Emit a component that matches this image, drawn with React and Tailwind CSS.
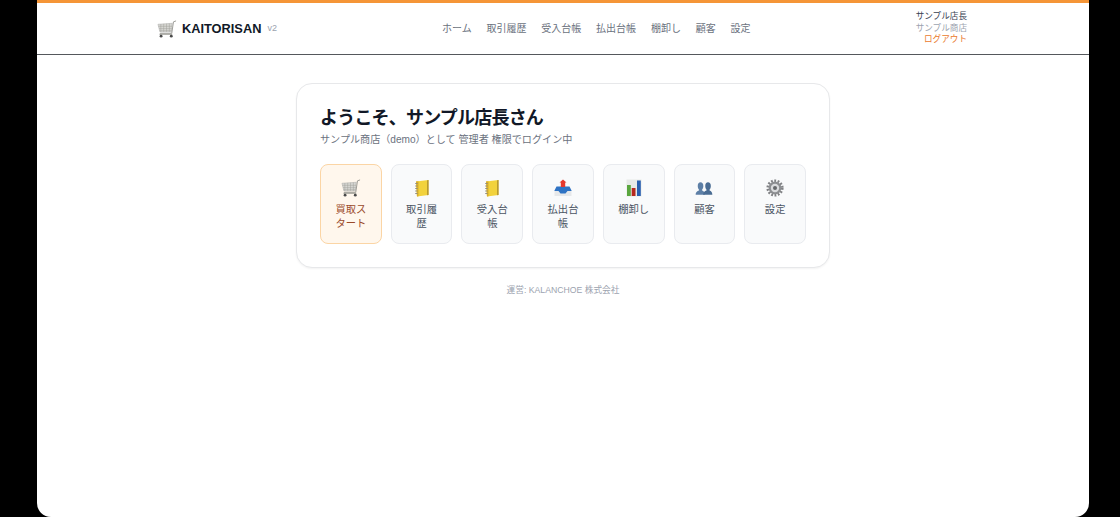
import React from 'react';

const font = "font-['Liberation_Sans','Noto_Sans_CJK_JP',sans-serif]";

const CartIcon = () => (
  <svg width="20" height="20" viewBox="-0.5 -0.5 21 21">
    <path d="M0.5 5 L15.5 4 L14.5 13 L2.5 13 Z" fill="#d6d6d2" stroke="#a8a8a5" strokeWidth="0.5" />
    <path d="M3.5 4.8V13M6.5 4.6V13M9.5 4.4V13M12.5 4.2V13M1 7.2H15.2M1.6 9.6H15M2.2 11.8H14.7" stroke="#a0a09a" strokeWidth="0.5" />
    <path d="M19.5 1.5 L16.8 2.5 L15 14.5 H3 L2.6 16" fill="none" stroke="#8f8f89" strokeWidth="0.9" />
    <rect x="2.5" y="15" width="13" height="1" fill="#96968f" />
    <circle cx="3.8" cy="17.5" r="1.5" fill="#4a4a4a" />
    <circle cx="14.5" cy="17.5" r="1.5" fill="#4a4a4a" />
  </svg>
);

const LedgerIcon = () => (
  <svg width="20" height="20" viewBox="0 0 20 20">
    <path d="M4 3.5 L16.5 2 V17 L5 18.5 Z" fill="#f2d23c" />
    <path d="M15.2 2.2 L16.5 2 V17 L15.2 17.2 Z" fill="#a98c2d" />
    <path d="M4 3.5 L6.5 3.2 V18.2 L5 18.5 Z" fill="#d8ad2b" />
    <path d="M3.2 5.5H5.6M3.2 8H5.6M3.2 10.5H5.6M3.2 13H5.6M3.2 15.5H5.6" stroke="#8d8a7c" strokeWidth="0.9" />
  </svg>
);

const OutboxIcon = () => (
  <svg width="20" height="20" viewBox="0 0 20 20">
    <path d="M1.5 12 H18.5 V18 H1.5 Z" fill="#e6e8ea" />
    <path d="M1.5 12.5 L3.5 8.5 H16.5 L18.5 12.5 V13 L14.5 13 L12.5 15.5 H7.5 L5.5 13 L1.5 13 Z" fill="#2f73c4" />
    <path d="M10 1.5 L13.5 4.5 H12.2 V9 H7.8 V4.5 H6.5 Z" fill="#e5392e" />
  </svg>
);

const ChartIcon = () => (
  <svg width="20" height="20" viewBox="0 0 20 20">
    <rect x="2.5" y="1.5" width="15" height="17" fill="#e7e9e8" />
    <rect x="3" y="7" width="3.8" height="11" fill="#5aa63e" />
    <rect x="7.7" y="10" width="3.8" height="8" fill="#b5281f" />
    <rect x="13" y="2.5" width="3.8" height="15.5" fill="#2a5fb0" />
  </svg>
);

const PeopleIcon = () => (
  <svg width="20" height="20" viewBox="-2 -2 24 24">
    <path d="M0 18 C0 14 3.2 13.8 4.3 12.4 C3.2 11 2.5 9.5 2.5 7.5 C2.5 4.5 3.8 3 5.8 3 C7.8 3 9.2 4.5 9.2 7.5 C9.2 9.5 8.5 11 7.4 12.4 C8.5 13.8 11 14 11 18 Z" fill="#5d7fa6" />
    <path d="M9 18 C9 14 12.2 13.8 13.3 12.4 C12.2 11 11.5 9.5 11.5 7.5 C11.5 4.5 12.8 3 14.8 3 C16.8 3 18.2 4.5 18.2 7.5 C18.2 9.5 17.5 11 16.4 12.4 C17.5 13.8 20 14 20 18 Z" fill="#4a6c93" />
  </svg>
);

const GearIcon = () => (
  <svg width="20" height="20" viewBox="0 0 20 20">
    <circle cx="10" cy="10" r="7.2" fill="none" stroke="#808184" strokeWidth="2.8" strokeDasharray="1.8 1.5" />
    <circle cx="10" cy="10" r="6.4" fill="#8c8e91" />
    <circle cx="10" cy="10" r="4.2" fill="#d9dadc" />
    <circle cx="10" cy="10" r="2" fill="#66686b" />
  </svg>
);

const navItems = ['ホーム', '取引履歴', '受入台帳', '払出台帳', '棚卸し', '顧客', '設定'];

const tiles = [
  { label: '買取スタート', icon: <CartIcon />, primary: true },
  { label: '取引履歴', icon: <LedgerIcon /> },
  { label: '受入台帳', icon: <LedgerIcon /> },
  { label: '払出台帳', icon: <OutboxIcon /> },
  { label: '棚卸し', icon: <ChartIcon /> },
  { label: '顧客', icon: <PeopleIcon /> },
  { label: '設定', icon: <GearIcon /> },
];

const Tile = ({ label, icon, primary }) => (
  <a
    className={
      primary
        ? 'flex h-20 flex-col items-center rounded-lg border border-[#fbd5a5] bg-[#fff7ed] px-[12px] pt-[13px] text-center'
        : 'flex h-20 flex-col items-center rounded-lg border border-[#e9ebef] bg-[#f9fafb] px-[12px] pt-[13px] text-center'
    }
  >
    {icon}
    <span
      className={
        primary
          ? 'mt-[5px] text-[10.3px] leading-[14px] text-[#9a4a2a]'
          : 'mt-[5px] text-[10.3px] leading-[14px] text-[#4b5563]'
      }
    >
      {label}
    </span>
  </a>
);

export default function App() {
  return (
    <div className={`${font} h-[517px] overflow-hidden bg-black pl-[37px]`}>
      <div className="h-full w-[1052px] overflow-hidden rounded-b-[14px] bg-white">
        <header className="h-[55px] border-t-[3px] border-b border-t-[#f59537] border-b-[#55585c] bg-white">
          <div className="mx-auto flex h-full w-[812px] items-center pr-[2px]">
            <div className="flex w-[285px] items-center">
              <CartIcon />
              <span className="ml-[5px] text-[12.8px] font-bold text-[#111827]">KAITORISAN</span>
              <span className="ml-[6px] text-[9px] text-[#9ca3af]">v2</span>
            </div>
            <nav className="flex gap-[14.8px] text-[10px] text-[#6b7280]">
              {navItems.map((item) => (
                <a key={item}>{item}</a>
              ))}
            </nav>
            <div className="ml-auto flex flex-col items-end text-[8.6px] leading-[11.6px]">
              <span className="text-[#374151]">サンプル店長</span>
              <span className="text-[#9ca3af]">サンプル商店</span>
              <span className="text-[#ea7a2c]">ログアウト</span>
            </div>
          </div>
        </header>

        <main className="flex flex-col items-center pt-7">
          <section className="w-[534px] rounded-2xl border border-[#e7e8ea] bg-white p-[23px] shadow-[0_1px_2px_rgba(0,0,0,0.05)]">
            <h1 className="mt-px text-[18px] leading-[20px] font-bold tracking-[-0.8px] text-[#111827]">
              ようこそ、サンプル店長さん
            </h1>
            <p className="mt-[4px] text-[10.1px] leading-[16px] text-[#6b7280]">
              サンプル商店（demo）として 管理者 権限でログイン中
            </p>
            <div className="mt-4 grid grid-cols-7 gap-[9px]">
              {tiles.map((tile) => (
                <Tile key={tile.label} {...tile} />
              ))}
            </div>
          </section>
          <p className="mt-[15px] text-[8.7px] leading-[14px] text-[#9ca3af]">運営: KALANCHOE 株式会社</p>
        </main>
      </div>
    </div>
  );
}
